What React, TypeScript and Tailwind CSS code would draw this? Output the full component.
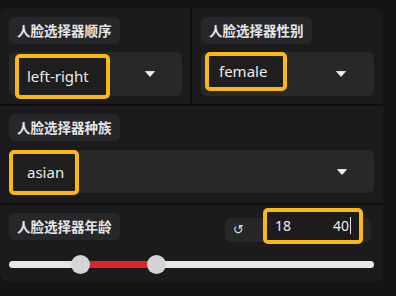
import React from "react";

const CJK = { fontFamily: '"Noto Sans CJK SC", "Noto Sans", sans-serif' };
const SANS = { fontFamily: '"Noto Sans", "Noto Sans CJK SC", sans-serif' };

function Chip({ children }: { children: React.ReactNode }) {
  return (
    <div className="self-start h-[27px] px-[8px] flex items-center rounded-md bg-[#27272a] text-[#e6e6e8] text-[13.5px] font-bold leading-none" style={CJK}>
      {children}
    </div>
  );
}

function Arrow() {
  return (
    <svg width="10" height="6" viewBox="0 0 10 6" className="shrink-0">
      <path d="M0.5 0.5 L9.5 0.5 L5 5.5 Z" fill="#f2f2f2" stroke="#f2f2f2" strokeWidth="0.8" strokeLinejoin="round" />
    </svg>
  );
}

export default function App() {
  return (
    <div className="w-[396px] h-[296px] bg-[#141416] pt-[8px] overflow-hidden" style={SANS}>
      <div className="w-[383px] flex flex-col gap-[2px] bg-[#0e0e10] rounded-lg overflow-hidden">
        {/* row 1 */}
        <div className="grid grid-cols-[190px_191px] gap-[2px] h-[96px]">
          <div className="bg-[#1b1b1d] pt-[9px] pl-[9px] pr-[8px] flex flex-col gap-[8px]">
            <Chip>人脸选择器顺序</Chip>
            <div className="h-[44px] rounded-md bg-[#28282b] flex items-start pr-[27px]">
              <div className="ml-[6px] mt-[2px] w-[95px] h-[45px] rounded-[5px] border-[4px] border-[#f7b912] bg-[#1f1e1e] flex items-center pl-[8px] text-[15px] text-[#ececec]">
                left-right
              </div>
              <div className="flex-1" />
              <div className="self-center"><Arrow /></div>
            </div>
          </div>
          <div className="bg-[#1b1b1d] pt-[9px] pl-[9px] pr-[9px] flex flex-col gap-[8px]">
            <Chip>人脸选择器性别</Chip>
            <div className="h-[44px] rounded-md bg-[#28282b] flex items-start pr-[28px]">
              <div className="ml-[4px] w-[82px] h-[39px] rounded-[5px] border-[4px] border-[#f7b912] bg-[#1f1e1e] flex items-center pl-[10px] text-[15px] text-[#ececec]">
                female
              </div>
              <div className="flex-1" />
              <div className="self-center"><Arrow /></div>
            </div>
          </div>
        </div>
        {/* row 2 */}
        <div className="h-[97px] bg-[#1b1b1d] pt-[8px] px-[9px] flex flex-col gap-[9px]">
          <Chip>人脸选择器种族</Chip>
          <div className="h-[43px] rounded-md bg-[#28282b] flex items-start pr-[27px]">
            <div className="w-[70px] h-[45px] rounded-[5px] border-[4px] border-[#f7b912] bg-[#1f1e1e] flex items-center pl-[14px] text-[15px] text-[#ececec]">
              asian
            </div>
            <div className="flex-1" />
            <div className="self-center"><Arrow /></div>
          </div>
        </div>
        {/* row 3 */}
        <div className="h-[77px] bg-[#1b1b1d] pt-[8px] pl-[9px] pr-[9px] flex flex-col">
          <div className="flex items-center justify-between h-[27px]">
            <Chip>人脸选择器年龄</Chip>
            <div className="relative w-[146px] h-[24px] mr-[3px] mt-[6px] rounded-md bg-[#27272a] flex items-center pl-[8px]">
              <span className="text-[13px] text-[#d8d8d8] leading-none" style={{ fontFamily: '"DejaVu Sans", sans-serif' }}>↺</span>
              <div className="absolute left-[38px] top-[-10px] w-[100px] h-[36px] rounded-[5px] border-[4px] border-[#f7b912] bg-[#1d1b1b] flex items-center justify-between pl-[8px] pr-[8px] text-[14px] text-[#eeeeee]">
                <span>18</span>
                <span className="flex items-center">40<span className="inline-block w-[1px] h-[17px] bg-[#dfe6ff] ml-[1px]" /></span>
              </div>
            </div>
          </div>
          <div className="relative mt-[15px] h-[20px] w-[365px]">
            <div className="absolute left-0 right-0 top-[6px] h-[7px] rounded-full bg-[#e6e6e6]" />
            <div className="absolute left-[72px] w-[76px] top-[6px] h-[7px] bg-[#dc2626]" />
            <div className="absolute left-[62px] top-[0px] w-[19px] h-[19px] rounded-full bg-[#d4d4d8]" />
            <div className="absolute left-[138px] top-[0px] w-[19px] h-[19px] rounded-full bg-[#d4d4d8]" />
          </div>
        </div>
      </div>
    </div>
  );
}
